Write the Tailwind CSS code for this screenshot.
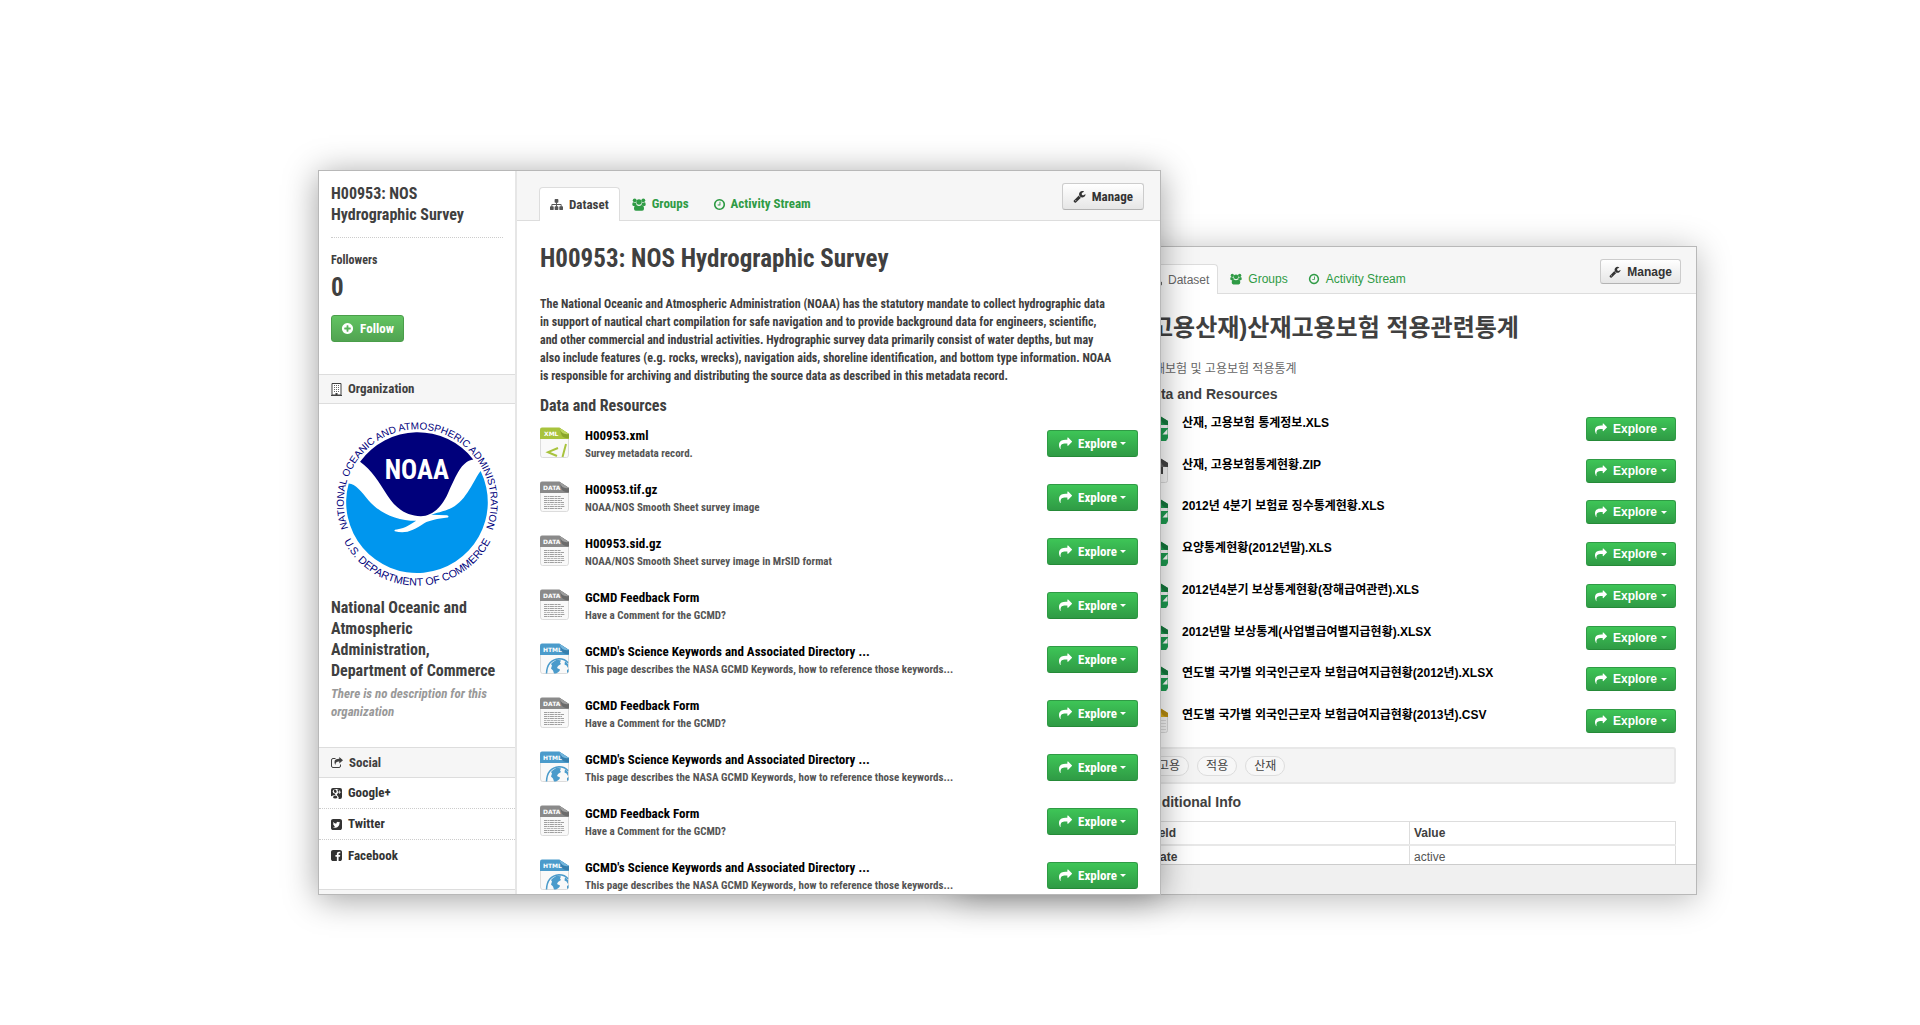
<!DOCTYPE html>
<html lang="en">
<head>
    <meta charset="UTF-8">
    <meta name="viewport" content="width=device-width, initial-scale=1.0">
    <title>H00953: NOS Hydrographic Survey</title>
    <script src="https://cdn.jsdelivr.net/npm/@tailwindcss/browser@4"></script>
</head>
<body class="bg-white text-[#404040]">

    <!-- Icon sprite -->
    <svg class="hidden" aria-hidden="true">
        <symbol id="i-share" viewBox="0 0 1792 1792"><path d="M1792 640q0 26-19 45l-512 512q-19 19-45 19t-45-19-19-45v-256h-224q-98 0-175.500 6t-154 21.500-133 42.500-105.500 69.500-80 101-48.500 138.500-17.500 181q0 55 5 123 0 6 2.500 23.500t2.500 26.500q0 15-8.500 25t-23.500 10q-16 0-28-17-7-9-13-22t-13.500-30-10.500-24q-127-285-127-451 0-199 53-333 162-403 875-403h224v-256q0-26 19-45t45-19 45 19l512 512q19 19 19 45z"/></symbol>
        <symbol id="i-sitemap" viewBox="0 0 1792 1792"><path d="M1792 1248v320q0 40-28 68t-68 28h-320q-40 0-68-28t-28-68v-320q0-40 28-68t68-28h96v-192h-512v192h96q40 0 68 28t28 68v320q0 40-28 68t-68 28h-320q-40 0-68-28t-28-68v-320q0-40 28-68t68-28h96v-192h-512v192h96q40 0 68 28t28 68v320q0 40-28 68t-68 28h-320q-40 0-68-28t-28-68v-320q0-40 28-68t68-28h96v-192q0-52 38-90t90-38h512v-192h-96q-40 0-68-28t-28-68v-320q0-40 28-68t68-28h320q40 0 68 28t28 68v320q0 40-28 68t-68 28h-96v192h512q52 0 90 38t38 90v192h96q40 0 68 28t28 68z"/></symbol>
        <symbol id="i-clock" viewBox="0 0 1792 1792"><path d="M1024 544v448q0 14-9 23t-23 9h-320q-14 0-23-9t-9-23v-64q0-14 9-23t23-9h224v-352q0-14 9-23t23-9h64q14 0 23 9t9 23zm416 352q0-148-73-273t-198-198-273-73-273 73-198 198-73 273 73 273 198 198 273 73 273-73 198-198 73-273zm224 0q0 209-103 385.500t-279.500 279.500-385.500 103-385.500-103-279.500-279.500-103-385.500 103-385.500 279.500-279.500 385.500-103 385.500 103 279.500 279.500 103 385.500z"/></symbol>
        <symbol id="i-wrench" viewBox="0 0 1792 1792"><path d="M448 1472q0-26-19-45t-45-19-45 19-19 45 19 45 45 19 45-19 19-45zm644-420l-682 682q-37 37-90 37-52 0-91-37l-106-108q-38-36-38-90 0-53 38-91l681-681q39 98 114.500 173.500t173.500 114.500zm634-435q0 39-23 106-47 134-164.500 217.500t-258.500 83.500q-185 0-316.500-131.500t-131.500-316.500 131.500-316.500 316.500-131.500q58 0 121.500 16.500t107.500 46.500q16 11 16 28t-16 28l-293 169v224l193 107q5-3 79-48.500t135.500-81 70.500-35.500q15 0 23.500 10t8.500 25z"/></symbol>
        <symbol id="i-plus" viewBox="0 0 1792 1792"><path d="M1344 960v-128q0-26-19-45t-45-19h-256v-256q0-26-19-45t-45-19h-128q-26 0-45 19t-19 45v256h-256q-26 0-45 19t-19 45v128q0 26 19 45t45 19h256v256q0 26 19 45t45 19h128q26 0 45-19t19-45v-256h256q26 0 45-19t19-45zm320-64q0 209-103 385.500t-279.500 279.500-385.500 103-385.500-103-279.500-279.500-103-385.500 103-385.500 279.500-279.500 385.500-103 385.500 103 279.500 279.500 103 385.500z"/></symbol>
        <symbol id="i-facebook" viewBox="128 128 1536 1536"><path d="M1376 128q119 0 203.500 84.500t84.500 203.500v960q0 119-84.500 203.500t-203.500 84.500h-188v-595h199l30-232h-229v-148q0-56 23.500-84t91.500-28l122-1v-207q-63-9-178-9-136 0-217.500 80t-81.500 226v171h-200v232h200v595h-532q-119 0-203.500-84.500t-84.500-203.500v-960q0-119 84.500-203.500t203.500-84.500h960z"/></symbol>
        <symbol id="i-twitter" viewBox="128 128 1536 1536"><path d="M1408 610q-56 25-121 34 68-40 93-117-65 38-134 51-61-66-153-66-87 0-148.500 61.500t-61.500 148.500q0 29 5 48-129-7-242-65t-192-155q-29 50-29 106 0 114 91 175-47-1-100-26v2q0 75 50 133.500t123 72.500q-29 8-51 8-13 0-39-4 21 63 74.500 104t121.500 42q-116 90-261 90-26 0-50-3 148 94 322 94 112 0 210-35.500t168-95 120.500-137 75-162 24.500-168.500q0-18-1-27 63-45 105-109zm256-194v960q0 119-84.500 203.500t-203.500 84.500h-960q-119 0-203.500-84.500t-84.500-203.500v-960q0-119 84.500-203.500t203.500-84.500h960q119 0 203.500 84.500t84.500 203.500z"/></symbol>
        <symbol id="i-google" viewBox="0 0 11 11"><path fill-rule="evenodd" d="M2 0h7q2 0 2 2v7q0 2-2 2H7.600q.6-1.900-1-3.200Q5.400 7 5.800 6.500 7.300 5.500 7 3.600 6.800 2.300 6 1.500h1L7.800.900H4.600Q2 1 1.600 3.200 1.500 5.400 4.200 5.700L4.300 6.900Q1.500 7 .4 8.300L0 8V2Q0 0 2 0zM8.200 2.600v1.200H7v.7h1.200v1.200h.7V4.500h1.200v-.7H8.900V2.600zM4 1.500q1.500.200 1.700 2Q5.700 4.900 4.600 5 3 4.900 2.800 3 2.900 1.600 4 1.500zM4.600 7.600q1.800.6 1.800 1.800-.200 1-2.200 1.100-2-.1-2.200-1.300.3-1.400 2.600-1.600z"/></symbol>
        <symbol id="i-users" viewBox="0 0 14 13"><circle cx="2.700" cy="2.300" r="1.900"/><circle cx="11.300" cy="2.300" r="1.900"/><circle cx="7" cy="4" r="2.700"/><path d="M.3 6.500q0-2.300 1.200-2.200.8.700 2.300.3.100 1.400.9 2.200Q3.500 7 3 7.900H1.400Q.3 7.700.3 6.500zM13.700 6.500q0-2.300-1.200-2.200-.8.700-2.300.3-.1 1.400-.9 2.200 1.200.2 1.700 1.100h1.600q1.100-.2 1.100-1.400zM4.600 7.100q2.400 1.700 4.800 0Q12 7.200 12 10.700q0 2-1.800 2.100H3.800Q2 12.700 2 10.700q0-3.500 2.600-3.600z"/></symbol>
        <symbol id="i-share-square" viewBox="0 0 12 11"><path fill="none" stroke="currentColor" d="M4.500 1.500H2q-1.500 0-1.500 1.500v6q0 1.500 1.500 1.500h6Q9.500 10.500 9.500 9V7.500"/><path d="M8.300 0 12 3.200 8.300 6.400V4.600Q4.600 4.300 4.300 8 1.500 2 8.300 1.800z"/></symbol>
        <symbol id="i-building" viewBox="0 0 11 13"><path fill="#fff" stroke="currentColor" d="M1 .5h9v11.500H1z"/><path d="M0 12h11v1H0zM4.500 10h2v2h-2z"/><path stroke="#666" stroke-dasharray="1 1" d="M3 2.500h6M3 4.500h6M3 6.500h6M3 8.500h6"/></symbol>

        <!-- File type icons -->
        <symbol id="f-xml" viewBox="0 0 29 31">
            <path fill="#f9f9f9" stroke="#dcdcdc" d="M.5 9h28v19q0 2.500-2 2.500h-24q-2 0-2-2.500z"/>
            <path fill="#a8c33d" d="M0 12V2.500Q0 .5 2 .5h17L29 7v5z"/><path fill="#8aa52b" d="m19 .5 10 6.500v4q-6.500 1-8-4.500Q20.500 3 19 .5z"/><path fill="#bdd65e" d="m19 .5 10 6.500q-5 .5-6.500-1Q20.500 4.500 19 .5z"/>
            <text x="4" y="8.500" font-family="DejaVu Sans" font-weight="bold" font-size="6" fill="#fff">XML</text>
            <path fill="none" stroke="#a8c33d" stroke-width="2" d="m18 21-10 4.200L17 29M26 17l-3.500 13"/>
        </symbol>
        <symbol id="f-data" viewBox="0 0 29 31">
            <path fill="#f9f9f9" stroke="#dcdcdc" d="M.5 9h28v19q0 2.500-2 2.500h-24q-2 0-2-2.500z"/>
            <path fill="#8a8a8a" d="M0 12V2.500Q0 .5 2 .5h17L29 7v5z"/><path fill="#6b6b6b" d="m19 .5 10 6.500v4q-6.500 1-8-4.500Q20.500 3 19 .5z"/><path fill="#9d9d9d" d="m19 .5 10 6.500q-5 .5-6.500-1Q20.500 4.500 19 .5z"/>
            <text x="3" y="8.500" font-family="DejaVu Sans" font-weight="bold" font-size="6" fill="#fff">DATA</text>
            <path fill="none" stroke="#a0a0a0" stroke-dasharray="3 .5 2 .4 4 .6" d="M4 15.500h17M4 17.500h20M4 19.500h18M4 21.500h20M4 25.500h21M4 27.500h18"/>
            <path fill="none" stroke="#b5b5b5" stroke-dasharray="2 .5 4 .5" d="M4 23.500h20"/>
        </symbol>
        <symbol id="f-html" viewBox="0 0 29 31">
            <path fill="#f9f9f9" stroke="#dcdcdc" d="M.5 9h28v19q0 2.500-2 2.500h-24q-2 0-2-2.500z"/>
            <path fill="#4b9bcb" d="M0 12V2.500Q0 .5 2 .5h17L29 7v5z"/><path fill="#357fae" d="m19 .5 10 6.500v4q-6.500 1-8-4.500Q20.500 3 19 .5z"/><path fill="#72b5dc" d="m19 .5 10 6.500q-5 .5-6.500-1Q20.500 4.500 19 .5z"/>
            <text x="3" y="8.500" font-family="DejaVu Sans" font-weight="bold" font-size="6" fill="#fff">HTML</text>
            <path fill="none" stroke="#4b9bcb" stroke-width="1.500" d="M6.500 30.500Q7 17 19 15.800q6 0 9 4"/>
            <path fill="#4b9bcb" d="m13 19 4-2.500 4 1-1 2 1 1.500-3 2-1 2 3 1.500q0 2-4 4h-2l-1-3-2-2 1-3-1-1.500zM25 18l3 3v4l-1.500-2.500-2-1zM27 27l1.500-1v3l-1.500 1z"/>
        </symbol>
        <symbol id="f-xls" viewBox="0 0 25 26">
            <path fill="#f9f9f9" stroke="#dcdcdc" d="M.5 8h24v15.500q0 2-2 2h-20q-2 0-2-2z"/>
            <path fill="#1f9e52" d="M0 9V2Q0 .5 2 .5h14L25 6v4H0z"/><path fill="#167a3e" d="m17 1 8 5v4q-7 0-8-9z"/>
            <path fill="#1f9e52" d="M8 13h17v10l-2 3H11q-3 0-3-3z"/><path fill="#fff" d="m24.500 14-5 5.500h5z"/>
        </symbol>
        <symbol id="f-zip" viewBox="0 0 25 26">
            <path fill="#f9f9f9" stroke="#dcdcdc" d="M.5 8h24v15.500q0 2-2 2h-20q-2 0-2-2z"/>
            <path fill="#666" d="M0 9V2Q0 .5 2 .5h14L25 6v4H0z"/><path fill="#444" d="m17 1 8 5v4q-7 0-8-9zM18 10h2v7h-2z"/>
        </symbol>
        <symbol id="f-csv" viewBox="0 0 25 26">
            <path fill="#f9f9f9" stroke="#dcdcdc" d="M.5 8h24v15.500q0 2-2 2h-20q-2 0-2-2z"/>
            <path fill="#e0b21e" d="M0 9V2Q0 .5 2 .5h14L25 6v4H0z"/><path fill="#b98e12" d="m17 1 8 5v4q-7 0-8-9z"/>
            <path fill="none" stroke="#ddd" d="M4 13.500h19M4 16.500h19M4 19.500h19M4 22.500h19"/>
        </symbol>
    </svg>

    <main class="grid h-screen grid-cols-[843fr_536fr] overflow-hidden pt-[170px] pr-[223px] pb-[130px] pl-[318px]">

        <!-- Front window -->
        <section class="relative z-10 flex min-h-0 overflow-hidden border border-[#b8b8b8] bg-white font-['Roboto_Condensed','Roboto',sans-serif] text-[13px] leading-[18px] font-bold shadow-[0_4px_32px_rgba(0,0,0,0.38)]">
            <aside class="w-[198px] shrink-0 border-r-2 border-[#e6e6e6]">
                <div class="px-3 pt-3">
                    <h2 class="border-b border-dotted border-[#ccc] pr-8 pb-3 text-base leading-[21px]">H00953: NOS Hydrographic Survey</h2>
                    <p class="mt-[13px] text-xs leading-[18px]">Followers</p>
                    <p class="mt-1 text-[25px] leading-[30px]">0</p>
                    <button class="mt-3 flex h-[27px] w-[73px] items-center justify-center gap-[6px] rounded-[3px] border border-[#4a9e4a] bg-linear-to-b from-[#62c462] to-[#51a351] text-white">
                        <svg class="size-[13px] fill-current"><use href="#i-plus"/></svg>Follow
                    </button>
                </div>

                <h3 class="mt-8 flex h-[30px] items-center gap-[6px] border-y border-[#ddd] bg-[#f6f6f6] px-3"><svg class="h-[13px] w-[11px] fill-current"><use href="#i-building"/></svg>Organization</h3>
                <div class="px-3 pt-4">
                    <svg class="ml-[3px] size-[167px]" viewBox="102 150 500 500" role="img" aria-label="NOAA">
                        <defs>
                            <path id="ring-top" d="M351 618A220 220 0 1 1 351.100 618"/>
                            <path id="ring-bottom" d="M103 398A248 248 0 0 0 599 398"/>
                        </defs>
                        <path fill="#00007b" d="M180 275A212 212 0 0 1 519 268C482 274 468 318 448 358 428 410 396 438 362 438 318 437 286 414 262 376 238 338 214 298 180 275z"/>
                        <path fill="#0096ee" d="M146 340A212 212 0 1 0 541 303C520 330 500 390 455 413 430 425 405 428 393 434L440 435Q448 437 443 442C410 446 390 450 372 459 340 480 318 492 284 483Q280 478 290 478C318 474 332 462 348 452 290 452 240 430 205 390 186 366 166 341 146 340z"/>
                        <text x="350" y="327" text-anchor="middle" font-family="Roboto Condensed, Roboto, sans-serif" font-weight="bold" font-size="80" fill="#fff">NOAA</text>
                        <g font-family="Liberation Sans, sans-serif" font-weight="normal" font-size="30" fill="#00007b" text-anchor="middle">
                            <text><textPath href="#ring-top" startOffset="50%">NATIONAL OCEANIC AND ATMOSPHERIC ADMINISTRATION</textPath></text>
                            <text font-size="32"><textPath href="#ring-bottom" startOffset="50%">U.S. DEPARTMENT OF COMMERCE</textPath></text>
                        </g>
                    </svg>
                    <h2 class="mt-[10px] text-base leading-[21px]">National Oceanic and Atmospheric Administration, Department of Commerce</h2>
                    <p class="mt-1 text-[#999] italic">There is no description for this organization</p>
                </div>

                <h3 class="mt-[26px] flex h-[31px] items-center gap-[6px] border-y border-[#ddd] bg-[#f6f6f6] px-3"><svg class="h-[11px] w-3 fill-current"><use href="#i-share-square"/></svg>Social</h3>
                <nav class="text-[#333]">
                    <a href="#" class="flex h-[31px] items-center gap-[6px] border-b border-dotted border-[#ccc] px-3"><svg class="size-[11px] fill-current"><use href="#i-google"/></svg>Google+</a>
                    <a href="#" class="flex h-[31px] items-center gap-[6px] border-b border-dotted border-[#ccc] px-3"><svg class="size-[11px] fill-current"><use href="#i-twitter"/></svg>Twitter</a>
                    <a href="#" class="flex h-[31px] items-center gap-[6px] px-3"><svg class="size-[11px] fill-current"><use href="#i-facebook"/></svg>Facebook</a>
                </nav>
                <div class="mt-[18px] h-8 border-t border-[#ddd] bg-[#f6f6f6]"></div>
            </aside>

            <div class="min-w-0 flex-1">
                <header class="flex h-[50px] border-b border-[#ddd] bg-[#f6f6f6] pr-4 pl-[22px]">
                    <nav class="flex items-end text-[#2f9b45]">
                        <a href="#" class="-mb-px flex h-[34px] items-center gap-[6px] rounded-t border border-b-0 border-[#ddd] bg-white px-[10px] text-[#404040]"><svg class="size-[13px] fill-[#555]"><use href="#i-sitemap"/></svg>Dataset</a>
                        <a href="#" class="flex h-8 items-center gap-[6px] px-3"><svg class="h-[13px] w-[14px] fill-current"><use href="#i-users"/></svg>Groups</a>
                        <a href="#" class="flex h-8 items-center gap-[5px] px-3"><svg class="size-[13px] fill-current"><use href="#i-clock"/></svg>Activity Stream</a>
                    </nav>
                    <button class="mt-3 ml-auto flex h-[27px] items-center gap-[6px] rounded-[3px] border border-[#ccc] border-b-[#b3b3b3] bg-linear-to-b from-white to-[#e6e6e6] px-[10px] text-[#333]"><svg class="size-[13px] fill-current"><use href="#i-wrench"/></svg>Manage</button>
                </header>
                <article class="pt-[23px] pr-[22px] pl-[23px]">
                    <h1 class="text-[25px] leading-[30px]">H00953: NOS Hydrographic Survey</h1>
                    <p class="mt-[21px] mr-6 text-xs leading-[18px]">The National Oceanic and Atmospheric Administration (NOAA) has the statutory mandate to collect hydrographic data in support of nautical chart compilation for safe navigation and to provide background data for engineers, scientific, and other commercial and industrial activities. Hydrographic survey data primarily consist of water depths, but may also include features (e.g. rocks, wrecks), navigation aids, shoreline identification, and bottom type information. NOAA is responsible for archiving and distributing the source data as described in this metadata record.</p>
                    <h2 class="mt-[11px] text-base leading-5">Data and Resources</h2>
                    <ul id="survey-files" class="mt-[11px]"></ul>
                </article>
            </div>
        </section>

        <!-- Back window -->
        <section class="mt-[76px] -ml-[204px] flex min-h-0 flex-col overflow-hidden border border-[#b8b8b8] bg-white font-['Liberation_Sans','Noto_Sans_CJK_KR',sans-serif] text-xs shadow-[0_4px_32px_rgba(0,0,0,0.28)]">
            <header class="flex h-[47px] shrink-0 border-b border-[#ddd] bg-[#f6f6f6] pr-[15px] pl-[183px]">
                <nav class="flex items-end text-[#2f9b45]">
                    <a href="#" class="-mb-px flex h-[30px] items-center gap-[6px] rounded-t border border-b-0 border-[#ddd] bg-white px-2 text-[#666]"><svg class="size-3 fill-current"><use href="#i-sitemap"/></svg>Dataset</a>
                    <a href="#" class="flex h-7 items-center gap-[6px] px-3"><svg class="size-3 fill-current"><use href="#i-users"/></svg>Groups</a>
                    <a href="#" class="flex h-7 items-center gap-[6px] px-2"><svg class="size-3 fill-current"><use href="#i-clock"/></svg>Activity Stream</a>
                </nav>
                <button class="mt-3 ml-auto flex h-[25px] items-center gap-[6px] rounded-[3px] border border-[#ccc] border-b-[#b3b3b3] bg-linear-to-b from-white to-[#e6e6e6] px-2 font-bold text-[#333]"><svg class="size-3 fill-current"><use href="#i-wrench"/></svg>Manage</button>
            </header>
            <article class="min-h-0 flex-1 overflow-hidden pt-[19px] pr-5 pl-[185px]">
                <h1 class="text-2xl leading-[30px] font-bold">(고용산재)산재고용보험 적용관련통계</h1>
                <p class="mt-[17px] leading-[18px] text-[#666]">산재보험 및 고용보험 적용통계</p>
                <h2 class="mt-[7px] text-sm leading-[18px] font-bold">Data and Resources</h2>
                <ul id="insurance-files" class="mt-3 flex h-[318px] flex-col justify-between"></ul>
                <div class="mt-[14px] -ml-1 flex h-[37px] items-center gap-2 rounded-[3px] border-2 border-[#e8e8e8] bg-[#f4f4f4] px-2 text-[#444]">
                    <a href="#" class="rounded-full border border-[#ddd] bg-[#f7f7f7] px-2 leading-[18px]">고용</a>
                    <a href="#" class="rounded-full border border-[#ddd] bg-[#f7f7f7] px-2 leading-[18px]">적용</a>
                    <a href="#" class="rounded-full border border-[#ddd] bg-[#f7f7f7] px-2 leading-[18px]">산재</a>
                </div>
                <h2 class="mt-[9px] text-sm leading-[18px] font-bold">Additional Info</h2>
                <table class="mt-[10px] w-full border border-[#ddd] text-left leading-4">
                    <thead>
                        <tr class="border-b-2 border-[#e8e8e8]"><th class="w-1/2 border-r border-[#ddd] px-1 py-[3px]">Field</th><th class="px-1 py-[3px]">Value</th></tr>
                    </thead>
                    <tbody>
                        <tr><th class="border-r border-[#ddd] px-1 py-[3px]">State</th><td class="px-1 py-[3px] text-[#555]">active</td></tr>
                    </tbody>
                </table>
            </article>
            <footer class="h-[30px] shrink-0 border-t border-[#ccc] bg-[#f0f0f0]"></footer>
        </section>
    </main>

    <script>
        const feedback = ['data', 'GCMD Feedback Form', 'Have a Comment for the GCMD?'];
        const keywords = ['html', "GCMD's Science Keywords and Associated Directory ...", 'This page describes the NASA GCMD Keywords, how to reference those keywords...'];
        const surveyFiles = [
            ['xml', 'H00953.xml', 'Survey metadata record.'],
            ['data', 'H00953.tif.gz', 'NOAA/NOS Smooth Sheet survey image'],
            ['data', 'H00953.sid.gz', 'NOAA/NOS Smooth Sheet survey image in MrSID format'],
            feedback, keywords, feedback, keywords, feedback, keywords
        ];
        const insuranceFiles = [
            ['xls', '산재, 고용보험 통계정보.XLS'],
            ['zip', '산재, 고용보험통계현황.ZIP'],
            ['xls', '2012년 4분기 보험료 징수통계현황.XLS'],
            ['xls', '요양통계현황(2012년말).XLS'],
            ['xls', '2012년4분기 보상통계현황(장해급여관련).XLS'],
            ['xls', '2012년말 보상통계(사업별급여별지급현황).XLSX'],
            ['xls', '연도별 국가별 외국인근로자 보험급여지급현황(2012년).XLSX'],
            ['csv', '연도별 국가별 외국인근로자 보험급여지급현황(2013년).CSV']
        ];

        document.getElementById('survey-files').innerHTML = surveyFiles.map(([type, name, text]) => `
            <li class="flex h-[54px] items-start">
                <svg class="h-[31px] w-[29px] shrink-0"><use href="#f-${type}"/></svg>
                <div class="ml-4">
                    <a href="#" class="block text-black">${name}</a>
                    <p class="text-[11px] leading-[18px] text-[#555]">${text}</p>
                </div>
                <button class="mt-[3px] ml-auto flex h-[27px] w-[91px] shrink-0 items-center justify-center rounded-[3px] border border-[#2f9b45] border-b-[#258a38] bg-linear-to-b from-[#3ec557] to-[#2f9b45] text-white">
                    <svg class="mr-[6px] size-[13px] fill-current"><use href="#i-share"/></svg>Explore
                    <svg class="ml-[3px] h-[3px] w-[6px] fill-current" viewBox="0 0 6 3"><path d="M0 0h6L3 3z"/></svg>
                </button>
            </li>`).join('');

        document.getElementById('insurance-files').innerHTML = insuranceFiles.map(([type, name]) => `
            <li class="flex h-[26px] items-start">
                <svg class="h-[26px] w-[25px] shrink-0"><use href="#f-${type}"/></svg>
                <a href="#" class="ml-[14px] leading-4 font-bold text-black">${name}</a>
                <button class="mt-[2px] ml-auto flex h-6 w-[90px] shrink-0 items-center justify-center rounded-[3px] border border-[#2f9b45] border-b-[#258a38] bg-linear-to-b from-[#3ec557] to-[#2f9b45] font-bold text-white">
                    <svg class="mr-[6px] size-3 fill-current"><use href="#i-share"/></svg>Explore
                    <svg class="ml-1 h-[3px] w-[6px] fill-current" viewBox="0 0 6 3"><path d="M0 0h6L3 3z"/></svg>
                </button>
            </li>`).join('');
    </script>
</body>
</html>
